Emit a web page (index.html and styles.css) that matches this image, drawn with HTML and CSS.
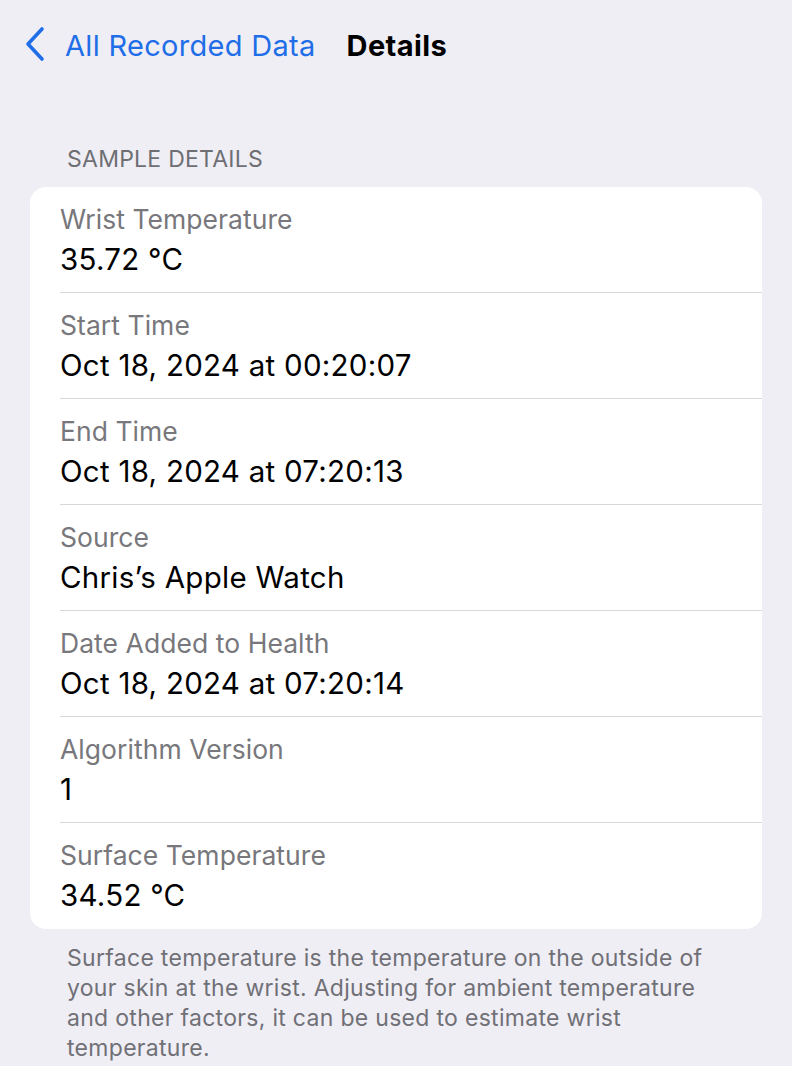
FILE: index.html
```html
<!DOCTYPE html>
<html>
<head>
<meta charset="utf-8">
<link rel="stylesheet" href="styles.css">
</head>
<body>
<header class="nav">
  <a class="back">
    <svg class="chev" width="22" height="36" viewBox="0 0 22 36"><path d="M18 3 L4 18 L18 33" fill="none" stroke="#1f6ee8" stroke-width="3.6" stroke-linecap="round" stroke-linejoin="round"/></svg>
    <span class="back-label">All Recorded Data</span>
  </a>
  <h1 class="title">Details</h1>
</header>
<main class="content">
  <div class="section-header">SAMPLE DETAILS</div>
  <div class="card">
    <div class="row"><div class="label">Wrist Temperature</div><div class="value">35.72 °C</div></div>
    <div class="row"><div class="label">Start Time</div><div class="value">Oct 18, 2024 at 00:20:07</div></div>
    <div class="row"><div class="label">End Time</div><div class="value">Oct 18, 2024 at 07:20:13</div></div>
    <div class="row"><div class="label">Source</div><div class="value">Chris’s Apple Watch</div></div>
    <div class="row"><div class="label">Date Added to Health</div><div class="value">Oct 18, 2024 at 07:20:14</div></div>
    <div class="row"><div class="label">Algorithm Version</div><div class="value">1</div></div>
    <div class="row"><div class="label">Surface Temperature</div><div class="value">34.52 °C</div></div>
  </div>
  <p class="footer">Surface temperature is the temperature on the outside of your skin at the wrist. Adjusting for ambient temperature and other factors, it can be used to estimate wrist temperature.</p>
</main>
</body>
</html>
```

FILE: styles.css
```css
html, body {
  margin: 0;
  padding: 0;
}
body {
  background: #efeef5;
  font-family: Inter, "Noto Sans", "Liberation Sans", sans-serif;
  width: 792px;
  height: 1066px;
  overflow: hidden;
}
.nav {
  display: flex;
  align-items: center;
  height: 90px;
  padding-left: 24px;
}
.back {
  display: flex;
  align-items: center;
  color: #1f6ee8;
}
.chev {
  display: block;
  margin-top: -2px;
}
.back-label {
  margin-left: 19px;
  font-size: 29px;
  letter-spacing: 0.3px;
}
.title {
  margin: 0 0 0 31px;
  font-size: 29px;
  font-weight: 700;
  color: #000;
  letter-spacing: 0.4px;
}
.content {
  padding: 0 30px;
}
.section-header {
  margin-top: 54px;
  padding-left: 37px;
  font-size: 23px;
  line-height: 30px;
  color: #6e6e73;
  letter-spacing: 0.25px;
  margin-bottom: 13px;
}
.card {
  background: #fff;
  border-radius: 16px;
  padding-left: 30px;
}
.row {
  padding: 16px 0 10px 0;
  border-bottom: 1px solid #d8d8dc;
}
.row:last-child {
  border-bottom: none;
  padding-bottom: 11px;
}
.label {
  font-size: 26.5px;
  line-height: 33px;
  color: #77777c;
  letter-spacing: 0.05px;
}
.value {
  font-size: 29.5px;
  line-height: 46px;
  color: #000;
  letter-spacing: 0.27px;
}
.footer {
  margin: 14px 0 0 0;
  padding: 0 40px 0 37px;
  font-size: 23px;
  line-height: 30px;
  color: #707076;
  letter-spacing: 0.3px;
}
```
